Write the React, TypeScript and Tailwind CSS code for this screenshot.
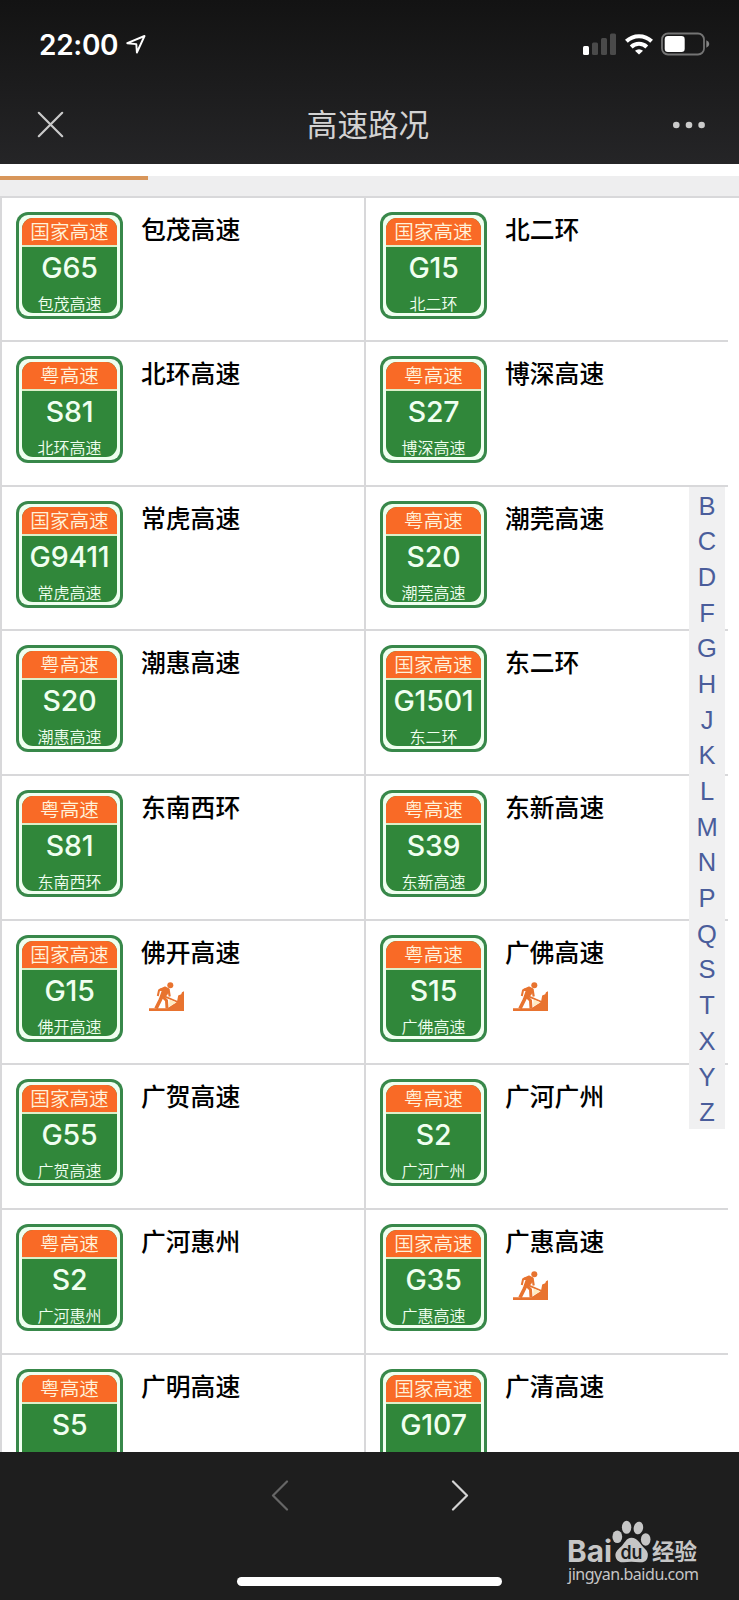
type Road = { kind: string; code: string; name: string; works?: boolean };

const roads: Road[] = [
  { kind: '国家高速', code: 'G65', name: '包茂高速' },
  { kind: '国家高速', code: 'G15', name: '北二环' },
  { kind: '粤高速', code: 'S81', name: '北环高速' },
  { kind: '粤高速', code: 'S27', name: '博深高速' },
  { kind: '国家高速', code: 'G9411', name: '常虎高速' },
  { kind: '粤高速', code: 'S20', name: '潮莞高速' },
  { kind: '粤高速', code: 'S20', name: '潮惠高速' },
  { kind: '国家高速', code: 'G1501', name: '东二环' },
  { kind: '粤高速', code: 'S81', name: '东南西环' },
  { kind: '粤高速', code: 'S39', name: '东新高速' },
  { kind: '国家高速', code: 'G15', name: '佛开高速', works: true },
  { kind: '粤高速', code: 'S15', name: '广佛高速', works: true },
  { kind: '国家高速', code: 'G55', name: '广贺高速' },
  { kind: '粤高速', code: 'S2', name: '广河广州' },
  { kind: '粤高速', code: 'S2', name: '广河惠州' },
  { kind: '国家高速', code: 'G35', name: '广惠高速', works: true },
  { kind: '粤高速', code: 'S5', name: '广明高速' },
  { kind: '国家高速', code: 'G107', name: '广清高速' },
];

const letters = 'BCDFGHJKLMNPQSTXYZ'.split('');

function StatusBar() {
  return (
    <div className="flex h-[88px] items-center justify-between pl-[39px] pr-[29px]">
      <div className="flex items-center gap-[8px] pt-px">
        <span className="font-[Inter] text-[28px] font-semibold leading-[34px] tracking-[-0.3px] text-white">22:00</span>
        <svg width="20" height="19" viewBox="0 0 20 19" fill="none" stroke="#fff" strokeWidth="1.9" strokeLinejoin="round">
          <path d="M18.5 1 1.3 8.2l9 .9.6 8.4Z" />
        </svg>
      </div>
      <div className="flex items-center gap-[8px]">
        <svg width="34" height="22" viewBox="0 0 34 22">
          <rect x="0" y="13" width="6" height="9" rx="1.5" fill="#fff" />
          <rect x="9" y="9.5" width="6" height="12.5" rx="1.5" fill="#4a4a4a" />
          <rect x="18" y="5" width="6" height="17" rx="1.5" fill="#4a4a4a" />
          <rect x="27" y="0.5" width="6" height="21.5" rx="1.5" fill="#4a4a4a" />
        </svg>
        <svg width="28" height="22" viewBox="0 0 28 22" fill="none" stroke="#fff" strokeWidth="4">
          <path d="M1.4 8.2a18.2 18.2 0 0 1 25.2 0" />
          <path d="M6.2 14a11.2 11.2 0 0 1 15.6 0" />
          <path d="M14 21.5 10 17.8a5.7 5.7 0 0 1 8 0Z" fill="#fff" stroke="none" />
        </svg>
        <svg width="49" height="24" viewBox="0 0 49 24">
          <rect x="1" y="1.5" width="42" height="21" rx="6" fill="none" stroke="#747474" strokeWidth="1.8" />
          <rect x="3.7" y="4" width="20" height="16" rx="3.2" fill="#fff" />
          <path d="M45.3 8.3q3 1.2 3 3.7t-3 3.7Z" fill="#858585" />
        </svg>
      </div>
    </div>
  );
}

function NavBar() {
  return (
    <div className="flex h-[76px] items-center justify-between pb-[3px] pl-[37px] pr-[34px]">
      <svg width="27" height="27" viewBox="0 0 27 27" stroke="#cacaca" strokeWidth="2.2" strokeLinecap="round">
        <path d="M1.8 1.8 25.2 25.2M25.2 1.8 1.8 25.2" />
      </svg>
      <h1 className="pb-[3px] pr-[1px] text-[30.6px] leading-[44px] text-[#d2d2d2]">高速路况</h1>
      <svg width="32" height="8" viewBox="0 0 32 8" fill="#cacaca">
        <circle cx="3.3" cy="4" r="3.3" />
        <circle cx="16" cy="4" r="3.3" />
        <circle cx="28.6" cy="4" r="3.3" />
      </svg>
    </div>
  );
}

function Shield({ road }: { road: Road }) {
  return (
    <div className="size-[107px] shrink-0 rounded-[12px] bg-[#38884a] p-[3px]">
      <div className="size-full rounded-[9px] bg-[#f0fff0] p-[3px]">
        <div className="flex size-full flex-col rounded-[11px] bg-[#30873a] text-center text-[#f0fff0]">
          <div className="h-[29px] shrink-0 rounded-t-[11px] border-b-2 border-[#dcefc8] bg-[#f96a26] text-[19.6px] font-[350] leading-[26px] text-[#fff2da]">
            {road.kind}
          </div>
          <div className="mt-[3px] h-[36px] shrink-0 whitespace-nowrap font-[Inter] text-[28.5px] font-medium leading-[36px] tracking-[-0.2px]">
            {road.code}
          </div>
          <div className="mt-[4px] h-[23px] shrink-0 whitespace-nowrap text-[16px] font-[350] leading-[26px]">{road.name}</div>
        </div>
      </div>
    </div>
  );
}

function WorksIcon() {
  return (
    <svg className="ml-[8px] mt-[13px]" width="36" height="29" viewBox="0 0 36 29" fill="none" stroke="#e8732f" strokeLinejoin="round">
      <circle cx="21.3" cy="3.3" r="3" fill="#e8732f" stroke="none" />
      <path d="M0 26.2h18.5l9.5-6.5 1.2-6.2 3-1.3.8-2 2-1V29H0Z" fill="#e8732f" stroke="none" />
      <path d="M10.500 7.800 16 5.200l3.500 1.800-1.500 5-3.500 4-3-1.500 2-5.700Z" fill="#e8732f" strokeWidth="1.500" />
      <path d="M13 7 10 8.500 8.800 14" strokeWidth="2" />
      <path d="M12.800 14.500 11 18.500 7 26.500" strokeWidth="3.600" />
      <path d="m13.500 14.500 4 4 .5 8" strokeWidth="3" />
      <path d="m19.500 7 1.200 7.500" strokeWidth="2.200" />
      <path d="m12 12.800 18 7.700" strokeWidth="1.800" />
      <path d="m20.500 17.500 7 3-7.500 4Z" fill="#ffebc2" stroke="none" />
    </svg>
  );
}

function RoadCell({ road }: { road: Road }) {
  return (
    <div className="flex border-l-2 border-t-2 border-[#d8d8da] pl-[14px] pt-[14px]">
      <Shield road={road} />
      <div className="ml-[18px] flex flex-col items-start">
        <div className="-mt-[2px] text-[24.8px] font-medium leading-[36px] text-black">{road.name}</div>
        {road.works && <WorksIcon />}
      </div>
    </div>
  );
}

function Watermark() {
  return (
    <svg className="absolute bottom-[13px] right-[37px]" width="136" height="68" viewBox="0 0 136 68" fill="#c6c6c6">
      <text x="1" y="42.7" fontFamily="Inter" fontWeight="700" fontSize="30" textLength="45" lengthAdjust="spacingAndGlyphs">Bai</text>
      <ellipse cx="51.3" cy="17.7" rx="4.9" ry="6.3" />
      <ellipse cx="60.6" cy="8.300" rx="4.7" ry="6.5" />
      <ellipse cx="72.4" cy="9" rx="4.7" ry="6.3" transform="rotate(12 72.4 9)" />
      <ellipse cx="79.7" cy="20.5" rx="4.8" ry="6.2" />
      <path d="M65.5 18.700c6 0 8 5.500 11.500 9 4 4 5.500 6 4.700 10-.8 4.500-4 6-8 5.500-6-.7-11-.7-16 0-4.200.5-7.700-2-8.200-6-.5-4 2-6.500 5.500-9.500s5-9 10.500-9Z" />
      <text x="54.500" y="39.500" fontFamily="Inter" fontWeight="600" fontSize="19" fill="#1e1e1e" textLength="22" lengthAdjust="spacingAndGlyphs">du</text>
      <text x="86" y="41" fontFamily="Noto Sans CJK SC" fontWeight="700" fontSize="23" textLength="45" lengthAdjust="spacingAndGlyphs">经验</text>
      <text x="2" y="60.500" fontFamily="Noto Sans" fontSize="16" textLength="131" lengthAdjust="spacing">jingyan.baidu.com</text>
    </svg>
  );
}

export default function App() {
  return (
    <div className="flex h-[1600px] w-[739px] flex-col overflow-hidden bg-white font-['Noto_Sans_CJK_SC',sans-serif]">
      <header className="h-[164px] shrink-0 bg-linear-to-b from-[#131313] to-[#252527]">
        <StatusBar />
        <NavBar />
      </header>
      <div className="h-[31.5px] shrink-0 bg-[#eeeeef]">
        <div className="h-[12px] bg-white" />
        <div className="h-[4px] w-[148px] bg-[#d8965a]" />
      </div>
      <main className="relative h-[1256.5px] shrink-0 overflow-hidden">
        <div className="grid w-[727.5px] auto-rows-[144.65px] grid-cols-[364px_363.5px]">
          {roads.map((road) => (
            <RoadCell key={road.name} road={road} />
          ))}
        </div>
        <div className="absolute right-0 top-0 h-[2px] w-[12px] bg-[#d8d8da]" />
        <nav className="absolute left-[689px] top-[291.5px] flex w-[36px] flex-col bg-[#f0f0f1] text-center font-['Liberation_Sans'] text-[25.5px] leading-[35.7px] text-[#4a5d9b]">
          {letters.map((l) => (
            <span key={l} className="h-[35.7px] pt-[1.5px]">
              {l}
            </span>
          ))}
        </nav>
      </main>
      <footer className="relative flex h-[148px] shrink-0 flex-col items-center bg-[#1e1e1e]">
        <div className="flex w-[198px] justify-between pt-[28px]">
          <svg width="18" height="31" viewBox="0 0 18 31" fill="none" stroke="#666" strokeWidth="2.2" strokeLinecap="round" strokeLinejoin="round">
            <path d="M16 1.5 2 15.5 16 29.5" />
          </svg>
          <svg width="18" height="31" viewBox="0 0 18 31" fill="none" stroke="#d4d4d4" strokeWidth="2.2" strokeLinecap="round" strokeLinejoin="round">
            <path d="M2 1.5 16 15.5 2 29.5" />
          </svg>
        </div>
        <div className="mt-[66px] h-[9px] w-[265px] rounded-full bg-white" />
        <Watermark />
      </footer>
    </div>
  );
}
